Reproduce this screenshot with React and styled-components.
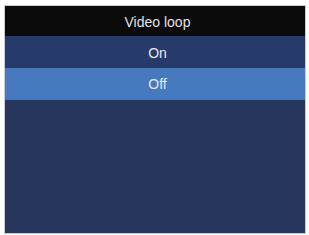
import React from "react";
import styled, { createGlobalStyle } from "styled-components";

const Global = createGlobalStyle`
  html, body { margin: 0; padding: 0; background: #ffffff; }
  body { font-family: "Liberation Sans", Arial, sans-serif; }
`;

const Page = styled.div`
  padding: 6px 4px 2px 5px;
`;

const Screen = styled.div`
  width: 300px;
  height: 227px;
  background: #27365d;
  display: flex;
  flex-direction: column;
  box-shadow: 0 0 0 1px #c9ccd2;
`;

const Header = styled.div`
  height: 30px;
  padding: 2px 0 0 5px;
  box-sizing: border-box;
  background: #0b0b0c;
  color: #e2e2e2;
  font-size: 14px;
  display: flex;
  align-items: center;
  justify-content: center;
`;

const Option = styled.div`
  height: 32px;
  padding: ${(p) => (p.$selected ? "0" : "1px")} 0 0 5px;
  box-sizing: border-box;
  background: ${(p) => (p.$selected ? "#4779bf" : "#263b6a")};
  color: #e4e9f2;
  font-size: 14px;
  display: flex;
  align-items: center;
  justify-content: center;
`;

export default function App() {
  return (
    <>
      <Global />
      <Page>
        <Screen>
          <Header>Video loop</Header>
          <Option>On</Option>
          <Option $selected>Off</Option>
        </Screen>
      </Page>
    </>
  );
}
